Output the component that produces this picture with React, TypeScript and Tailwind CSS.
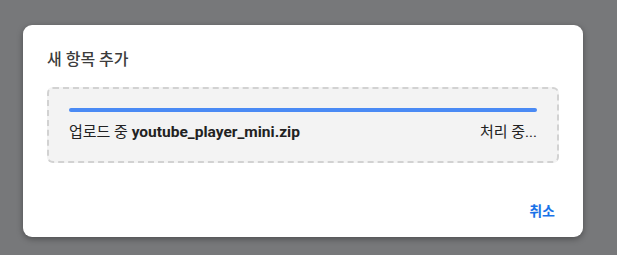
import { useState } from "react";

/* ===============================
   UPLOAD DIALOG
   =============================== */

interface UploadItem {
  fileName: string;
  progress: number;
  status: string;
}

export default function App() {
  const [item] = useState<UploadItem>({
    fileName: "youtube_player_mini.zip",
    progress: 100,
    status: "처리 중...",
  });

  return (
    <div
      className="w-[617px] h-[255px] bg-[#77787a] flex pl-[23px] pt-[25px]"
      style={{ fontFamily: 'Roboto, "Noto Sans CJK KR", sans-serif' }}
    >
      <div className="w-[560px] h-[212px] bg-white rounded-[9px] shadow-[0_2px_6px_rgba(0,0,0,0.35)] flex flex-col px-6 pt-6">
        <h2 className="text-[16px] leading-[22px] font-medium text-[#3c3c3c]">
          새 항목 추가
        </h2>

        {/* DROP ZONE – UPLOAD PROGRESS */}
        <div className="mt-4 bg-[#f3f3f3] border-2 border-dashed border-[#d2d2d2] rounded-md px-5 pt-[19px] pb-[19px]">
          <div className="h-1 bg-[#e2e2e2] rounded-sm overflow-hidden">
            <div
              className="h-full bg-[#4a8af4]"
              style={{ width: `${item.progress}%` }}
            />
          </div>
          <div className="mt-[10px] flex justify-between text-[15px] leading-5 text-[#222]">
            <span>
              업로드 중{" "}
              <b className="font-bold text-[15.5px]">{item.fileName}</b>
            </span>
            <span>{item.status}</span>
          </div>
        </div>

        {/* FOOTER */}
        <div className="flex justify-end mt-auto pb-2">
          <button className="h-9 pl-1 pr-[4px] text-[14px] font-bold text-[#1a73e8]">
            취소
          </button>
        </div>
      </div>
    </div>
  );
}
